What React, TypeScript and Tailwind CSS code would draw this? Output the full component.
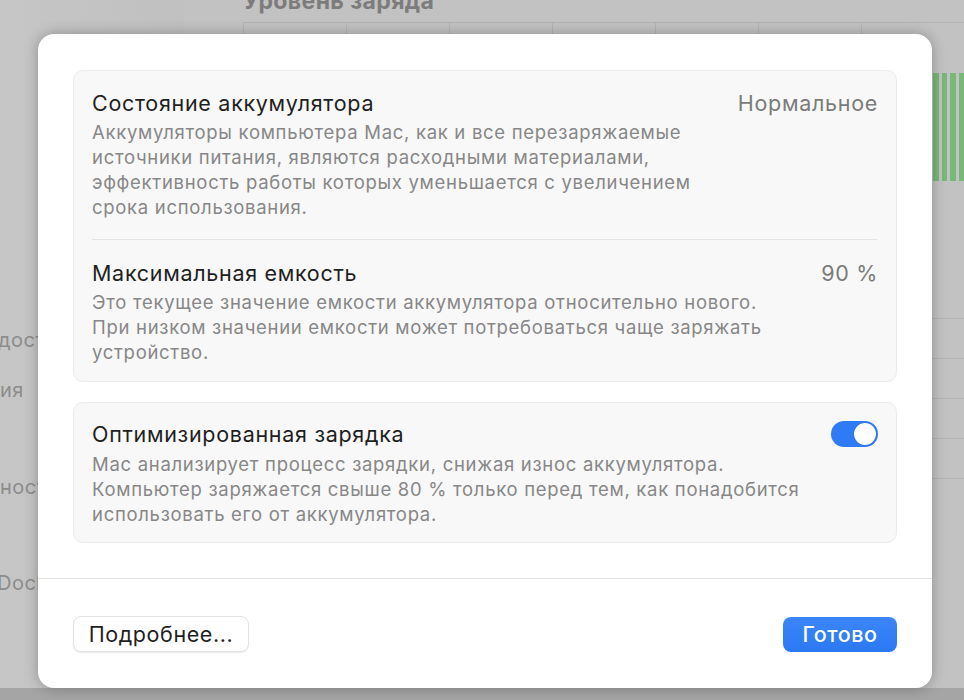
import React from "react";

const font = { fontFamily: "Inter, 'Noto Sans', 'Liberation Sans', sans-serif" };

function Section({ title, value, lines }: { title: string; value?: React.ReactNode; lines: string[] }) {
  return (
    <div className="flex items-start justify-between">
      <div className="flex flex-col">
        <div className="h-[26px] whitespace-nowrap text-[21.5px] leading-[26px] tracking-[0.7px] text-[#1f1f1f]">{title}</div>
        <div className="mt-[4px] text-[18.5px] leading-[25px] tracking-[0.7px] text-[#878787]">
          {lines.map((l, i) => (
            <div key={i} className="whitespace-nowrap">{l}</div>
          ))}
        </div>
      </div>
      {value !== undefined && (
        <div className="h-[26px] whitespace-nowrap text-[21.5px] leading-[26px] tracking-[0.7px] text-[#7b7b7b]">{value}</div>
      )}
    </div>
  );
}

export default function App() {
  return (
    <div className="relative h-[700px] w-[964px] overflow-hidden bg-[#bdbdbd]" style={font}>
      {/* background window */}
      <div className="flex h-full w-full">
        <div className="flex h-full w-[184px] flex-col bg-gradient-to-r from-[#c6c6c6] to-[#c0c0c0] pt-[326px] text-[20px] tracking-[0.5px] text-[#8c8c8c]">
          <div className="-ml-[2px] h-[28px] leading-[28px]">доступ</div>
          <div className="mt-[22px] h-[28px] leading-[28px]">ия</div>
          <div className="mt-[69px] h-[28px] leading-[28px]">ность</div>
          <div className="-ml-[3px] mt-[68px] h-[28px] leading-[28px]">Dock</div>
        </div>
        <div className="flex h-full flex-1 flex-col bg-[#c2c2c2] pl-[59px]">
          <div className="-mt-[13px] h-[28px] text-[23px] font-bold leading-[28px] tracking-[0.4px] text-[#7c7c7c]">Уровень заряда</div>
          <div className="mt-[7px] grid h-[40px] grid-cols-7 border-t border-[#b3b3b3]">
            <div className="border-l border-[#b3b3b3]" />
            <div className="border-l border-[#b3b3b3]" />
            <div className="border-l border-[#b3b3b3]" />
            <div className="border-l border-[#b3b3b3]" />
            <div className="border-l border-[#b3b3b3]" />
            <div className="border-l border-[#b3b3b3]" />
            <div className="border-l border-[#b3b3b3]" />
          </div>
          <div className="flex justify-end">
            <div className="mt-[11px] flex h-[108px] w-[32px] gap-[3px] pl-[1px]">
              <div className="w-[6px] bg-[#79b879]" />
              <div className="w-[6px] bg-[#79b879]" />
              <div className="w-[6px] bg-[#79b879]" />
              <div className="w-[6px] bg-[#79b879]" />
            </div>
          </div>
          <div className="mt-[137px] flex flex-col">
            <div className="h-[40px] border-t border-[#b3b3b3]" />
            <div className="h-[40px] border-t border-[#b3b3b3]" />
            <div className="h-[40px] border-t border-[#b3b3b3]" />
            <div className="h-[40px] border-t border-[#b3b3b3]" />
            <div className="h-[40px] border-t border-[#b3b3b3]" />
          </div>
        </div>
      </div>
      <div className="absolute bottom-0 left-0 h-[12px] w-full bg-[#a5a5a5]" />

      {/* dialog */}
      <div className="absolute left-[38px] top-[34px] flex h-[654px] w-[894px] flex-col rounded-[16px] bg-white shadow-[0_0_14px_rgba(0,0,0,0.28)]">
        <div className="flex flex-col gap-[20px] px-[35px] pt-[36px]">
          <div className="rounded-[10px] border border-[#ebebeb] bg-[#f8f8f8] px-[18px]">
            <div className="pb-[19px] pt-[19px]">
              <Section
                title="Состояние аккумулятора"
                value="Нормальное"
                lines={[
                  "Аккумуляторы компьютера Mac, как и все перезаряжаемые",
                  "источники питания, являются расходными материалами,",
                  "эффективность работы которых уменьшается с увеличением",
                  "срока использования.",
                ]}
              />
            </div>
            <div className="h-px bg-[#e4e4e4]" />
            <div className="pb-[16px] pt-[20px]">
              <Section
                title="Максимальная емкость"
                value="90 %"
                lines={[
                  "Это текущее значение емкости аккумулятора относительно нового.",
                  "При низком значении емкости может потребоваться чаще заряжать",
                  "устройство.",
                ]}
              />
            </div>
          </div>
          <div className="rounded-[10px] border border-[#ebebeb] bg-[#f8f8f8] px-[18px] pb-[15px] pt-[18px]">
            <div className="flex items-start justify-between">
              <div className="flex flex-col">
                <div className="h-[26px] whitespace-nowrap text-[21.5px] leading-[26px] tracking-[0.7px] text-[#1f1f1f]">Оптимизированная зарядка</div>
                <div className="mt-[5px] text-[18.5px] leading-[25px] tracking-[0.7px] text-[#878787]">
                  <div className="whitespace-nowrap">Mac анализирует процесс зарядки, снижая износ аккумулятора.</div>
                  <div className="whitespace-nowrap">Компьютер заряжается свыше 80 % только перед тем, как понадобится</div>
                  <div className="whitespace-nowrap">использовать его от аккумулятора.</div>
                </div>
              </div>
              <div className="flex h-[26px] w-[47px] items-center justify-end rounded-full bg-[#2f7bf5] p-[2px]">
                <div className="h-[22px] w-[22px] rounded-full bg-white shadow-[0_0_1px_rgba(0,0,0,0.4)]" />
              </div>
            </div>
          </div>
        </div>
        <div className="mt-[35px] h-px bg-[#e3e3e3]" />
        <div className="flex items-center justify-between px-[35px] pt-[37px]">
          <button className="flex h-[36px] w-[176px] items-center justify-center rounded-[8px] border border-[#e2e2e2] bg-white text-[21.5px] tracking-[0.6px] text-[#1f1f1f] shadow-[0_1px_1px_rgba(0,0,0,0.08)]">
            Подробнее...
          </button>
          <button className="flex h-[35px] w-[114px] items-center justify-center rounded-[8px] bg-gradient-to-b from-[#3a86f8] to-[#2c78f3] text-[21.5px] font-medium tracking-[0.5px] text-white">
            Готово
          </button>
        </div>
      </div>
    </div>
  );
}
